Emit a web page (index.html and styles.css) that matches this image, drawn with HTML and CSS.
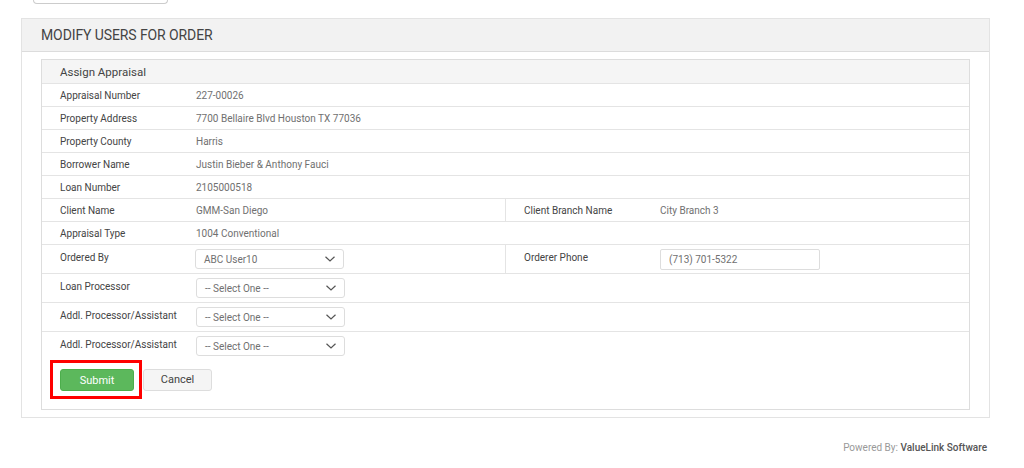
FILE: index.html
```html
<!DOCTYPE html>
<html lang="en">
<head>
    <title>Modify Users For Order</title>
    <meta charset="UTF-8">
    <link rel="stylesheet" href="styles.css">
</head>
<body>
    <div class="top-tab"></div>

    <div class="panel">
        <div class="panel-head">MODIFY USERS FOR ORDER</div>
        <div class="panel-body">
            <div class="box">
                <div class="box-head">Assign Appraisal</div>

                <div class="row">
                    <div class="col"><span class="lbl">Appraisal Number</span><span class="val">227-00026</span></div>
                </div>
                <div class="row">
                    <div class="col"><span class="lbl">Property Address</span><span class="val">7700 Bellaire Blvd Houston TX 77036</span></div>
                </div>
                <div class="row">
                    <div class="col"><span class="lbl">Property County</span><span class="val">Harris</span></div>
                </div>
                <div class="row">
                    <div class="col"><span class="lbl">Borrower Name</span><span class="val">Justin Bieber &amp; Anthony Fauci</span></div>
                </div>
                <div class="row">
                    <div class="col"><span class="lbl">Loan Number</span><span class="val">2105000518</span></div>
                </div>
                <div class="row">
                    <div class="col half"><span class="lbl">Client Name</span><span class="val">GMM-San Diego</span></div>
                    <div class="col split"><span class="lbl">Client Branch Name</span><span class="val">City Branch 3</span></div>
                </div>
                <div class="row">
                    <div class="col"><span class="lbl">Appraisal Type</span><span class="val">1004 Conventional</span></div>
                </div>

                <div class="row tall">
                    <div class="col half">
                        <span class="lbl">Ordered By</span>
                        <div class="select narrow"><span>ABC User10</span>
                            <svg width="10" height="6" viewBox="0 0 10 6"><path d="M0.5 0.8l4.5 4.2 4.5-4.2" fill="none" stroke="#555" stroke-width="1.2"/></svg>
                        </div>
                    </div>
                    <div class="col split">
                        <span class="lbl">Orderer Phone</span>
                        <div class="input">(713) 701-5322</div>
                    </div>
                </div>
                <div class="row tall">
                    <div class="col">
                        <span class="lbl">Loan Processor</span>
                        <div class="select"><span>-- Select One --</span>
                            <svg width="10" height="6" viewBox="0 0 10 6"><path d="M0.5 0.8l4.5 4.2 4.5-4.2" fill="none" stroke="#555" stroke-width="1.2"/></svg>
                        </div>
                    </div>
                </div>
                <div class="row tall">
                    <div class="col">
                        <span class="lbl">Addl. Processor/Assistant</span>
                        <div class="select"><span>-- Select One --</span>
                            <svg width="10" height="6" viewBox="0 0 10 6"><path d="M0.5 0.8l4.5 4.2 4.5-4.2" fill="none" stroke="#555" stroke-width="1.2"/></svg>
                        </div>
                    </div>
                </div>
                <div class="row tall">
                    <div class="col">
                        <span class="lbl">Addl. Processor/Assistant</span>
                        <div class="select"><span>-- Select One --</span>
                            <svg width="10" height="6" viewBox="0 0 10 6"><path d="M0.5 0.8l4.5 4.2 4.5-4.2" fill="none" stroke="#555" stroke-width="1.2"/></svg>
                        </div>
                    </div>
                </div>

                <div class="actions">
                    <span class="highlight"><button class="btn btn-submit">Submit</button></span>
                    <button class="btn btn-cancel">Cancel</button>
                </div>
            </div>
        </div>
    </div>

    <div class="footer">Powered By: <span class="brand">ValueLink Software</span></div>
</body>
</html>
```

FILE: styles.css
```css
body {
    font-family: Roboto, "Liberation Sans", sans-serif;
    background-color: #fff;
    color: #555;
    margin: 0;
    padding: 0;
}

.top-tab {
    margin-left: 33px;
    width: 133px;
    height: 3px;
    border: 1px solid #ccc;
    border-top: none;
    border-radius: 0 0 4px 4px;
}

.panel {
    margin: 14px 0 0 21px;
    width: 967px;
    border: 1px solid #e3e3e3;
}

.panel-head {
    height: 32px;
    line-height: 33px;
    padding-left: 19px;
    background: #f2f2f2;
    border-bottom: 1px solid #dcdcdc;
    font-size: 14px;
    color: #444;
    letter-spacing: -0.1px;
}

.panel-body {
    padding: 7px 19px 7px 19px;
}

.box {
    border: 1px solid #ddd;
}

.box-head {
    height: 23px;
    line-height: 24px;
    padding-left: 18px;
    background: #f5f5f5;
    font-size: 11.5px;
    color: #444;
}

.row {
    display: flex;
    border-top: 1px solid #e4e4e4;
    font-size: 10px;
}

.col {
    display: flex;
    align-items: center;
    height: 22px;
    padding-left: 18px;
}

.col.half {
    width: 445px;
}

.col.split {
    border-left: 1px solid #e4e4e4;
}

.lbl {
    width: 136px;
    flex-shrink: 0;
    color: #444;
}

.val {
    color: #707070;
}

.row.tall .col {
    height: 28px;
    align-items: flex-start;
}

.row.tall .lbl {
    padding-top: 7px;
}

.select {
    display: flex;
    align-items: center;
    justify-content: space-between;
    box-sizing: border-box;
    width: 149px;
    height: 20px;
    margin-top: 4px;
    padding: 0 8px 0 8px;
    border: 1px solid #ddd;
    border-radius: 3px;
    color: #707070;
    background: #fff;
}

.select.narrow {
    width: 149px;
    margin-left: -1px;
}

.input {
    box-sizing: border-box;
    width: 160px;
    height: 21px;
    line-height: 19px;
    margin-top: 4px;
    padding-left: 8px;
    border: 1px solid #ddd;
    border-radius: 2px;
    color: #707070;
}

.actions {
    display: flex;
    align-items: center;
    padding: 0 0 10px 8px;
}

.highlight {
    display: inline-flex;
    padding: 6px 5px 5px 7px;
    border: 3px solid #f00;
}

.btn {
    font-family: Roboto, "Liberation Sans", sans-serif;
    font-size: 11px;
    height: 22px;
    border-radius: 3px;
    cursor: pointer;
}

.btn-submit {
    width: 74px;
    border: 1px solid #4cae4c;
    background-color: #5cb85c;
    color: #fff;
}

.btn-cancel {
    width: 69px;
    margin-left: 1px;
    border: 1px solid #ddd;
    background-color: #f5f5f5;
    color: #444;
}

.footer {
    text-align: right;
    padding: 24px 37px 0 0;
    font-size: 10px;
    color: #999;
}

.brand {
    color: #555;
    font-weight: 500;
}
```
